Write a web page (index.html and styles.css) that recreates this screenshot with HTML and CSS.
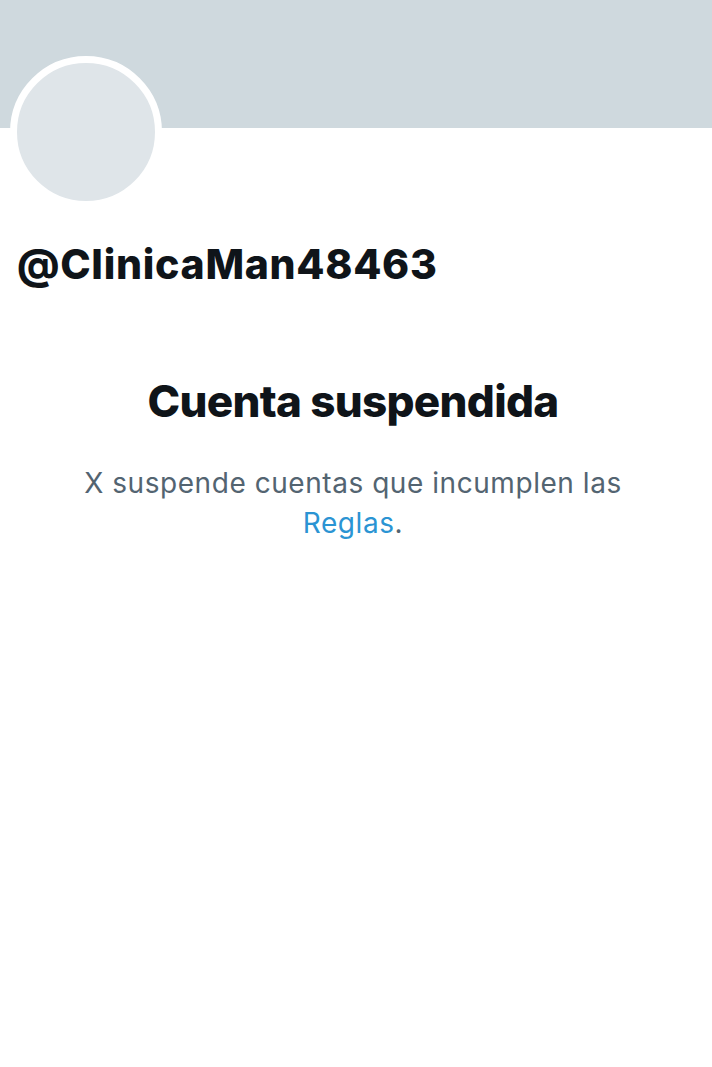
FILE: index.html
```html
<!DOCTYPE html>
<html lang="es">
<head>
<meta charset="utf-8">
<link rel="stylesheet" href="styles.css">
</head>
<body>
<div class="page">
  <header class="banner"></header>
  <div class="profile">
    <div class="avatar-row">
      <div class="avatar"></div>
    </div>
    <h1 class="handle">@ClinicaMan48463</h1>
  </div>
  <section class="notice">
    <h2 class="notice-title">Cuenta suspendida</h2>
    <p class="notice-text">X suspende cuentas que incumplen las <a href="#" class="link">Reglas</a>.</p>
  </section>
</div>
</body>
</html>
```
FILE: styles.css
```css
html, body {
  margin: 0;
  padding: 0;
  background: #ffffff;
}
.page {
  width: 712px;
  min-height: 1067px;
  font-family: Inter, "Noto Sans", sans-serif;
}
.banner {
  height: 128px;
  background: #cfd9de;
}
.profile {
  padding: 0 17px;
}
.avatar-row {
  display: flex;
  margin-top: -72px;
  margin-left: -7px;
}
.avatar {
  width: 138px;
  height: 138px;
  border-radius: 50%;
  background: #dfe5e9;
  border: 7px solid #ffffff;
}
.handle {
  margin: 30px 0 0;
  font-size: 41px;
  font-weight: 800;
  letter-spacing: 0.7px;
  color: #0f1419;
  line-height: 52px;
}
.notice {
  margin-top: 83px;
  padding: 0 62px 0 56px;
  text-align: center;
}
.notice-title {
  margin: 0;
  font-size: 44px;
  font-weight: 800;
  letter-spacing: -0.7px;
  color: #0f1419;
  line-height: 56px;
}
.notice-text {
  margin: 34px 0 0;
  font-size: 28px;
  font-weight: 400;
  letter-spacing: 0.55px;
  color: #536471;
  line-height: 40px;
}
.link {
  color: #2b94d3;
  text-decoration: none;
}
```
